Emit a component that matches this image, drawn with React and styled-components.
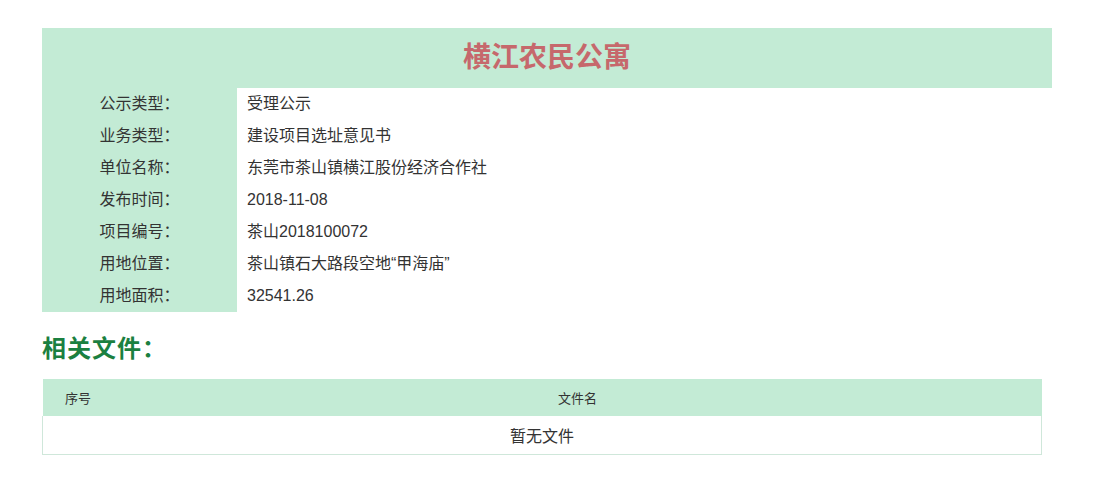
import React from 'react';
import styled, { createGlobalStyle } from 'styled-components';

const GlobalStyle = createGlobalStyle`
  body {
    margin: 0;
    background: #fff;
    font-family: "Liberation Sans", "Noto Sans CJK SC", sans-serif;
    color: #333;
  }
`;

const info = [
  ['公示类型', '受理公示'],
  ['业务类型', '建设项目选址意见书'],
  ['单位名称', '东莞市茶山镇横江股份经济合作社'],
  ['发布时间', '2018-11-08'],
  ['项目编号', '茶山2018100072'],
  ['用地位置', '茶山镇石大路段空地“甲海庙”'],
  ['用地面积', '32541.26'],
];

const App = () => (
  <Page>
    <GlobalStyle />
    <Panel>
      <Title>横江农民公寓</Title>
      {info.map(([label, value]) => (
        <Row key={label}>
          <Label>
            {label}
            <Colon>：</Colon>
          </Label>
          <Value>{value}</Value>
        </Row>
      ))}
    </Panel>

    <SectionTitle>
      相关文件
      <Colon $w={24}>：</Colon>
    </SectionTitle>

    <FileTable>
      <thead>
        <tr>
          <Th width="71">序号</Th>
          <Th>文件名</Th>
        </tr>
      </thead>
      <tbody>
        <tr>
          <Empty colSpan={2}>暂无文件</Empty>
        </tr>
      </tbody>
    </FileTable>
  </Page>
);

export default App;

const Page = styled.div`
  padding: 28px 44px 0 42px;
`;

const Panel = styled.div`
  width: 1010px;
`;

const Title = styled.h1`
  margin: 0;
  height: 60px;
  line-height: 60px;
  background: #c3ebd5;
  color: #c6686c;
  font-size: 28px;
  font-weight: bold;
  text-align: center;
`;

const Row = styled.div`
  display: flex;
  height: 32px;
  line-height: 32px;
  font-size: 16px;
`;

const Label = styled.div`
  width: 195px;
  flex-shrink: 0;
  background: #c3ebd5;
  text-align: center;
  color: #333;
`;

const Colon = styled.span`
  display: inline-block;
  width: ${(p) => p.$w || 16}px;
  text-align: center;
`;

const Value = styled.div`
  padding-left: 10px;
  color: #333;
`;

const SectionTitle = styled.h2`
  margin: 20px 0 0;
  height: 34px;
  line-height: 34px;
  font-size: 24px;
  font-weight: bold;
  color: #1b8040;
  letter-spacing: 1px;
`;

const FileTable = styled.table`
  margin-top: 13px;
  width: 1000px;
  border-collapse: collapse;
  table-layout: fixed;
`;

const Th = styled.th`
  height: 37px;
  padding: 0;
  background: #c3ebd5;
  font-size: 13px;
  font-weight: normal;
  color: #333;
  text-align: center;
`;

const Empty = styled.td`
  height: 38px;
  padding: 0;
  border: 1px solid #cfe7da;
  border-top: none;
  text-align: center;
  font-size: 16px;
  color: #333;
`;
